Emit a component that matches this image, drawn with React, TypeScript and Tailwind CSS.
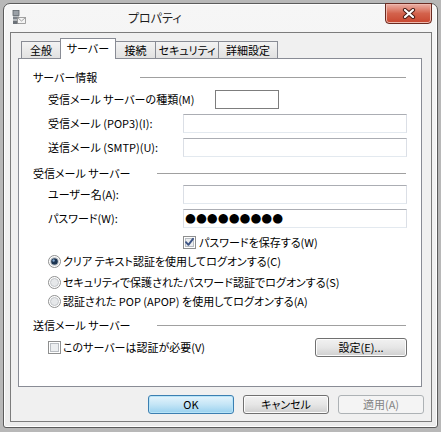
import React from 'react';

const Checkbox: React.FC<{ checked?: boolean }> = ({ checked }) => (
  <svg width="13" height="13" viewBox="0 0 13 13" className="shrink-0">
    <rect x="0.5" y="0.5" width="12" height="12" fill="#ffffff" stroke="#8e8f8f" />
    <rect x="2.5" y="2.5" width="8" height="8" fill="#eceef0" stroke="#b9bdc2" />
    {checked && (
      <path d="M3 6.2 L5.4 8.8 L10 2.8" fill="none" stroke="#3d5485" strokeWidth="1.9" strokeLinecap="round" strokeLinejoin="round" />
    )}
  </svg>
);

const Radio: React.FC<{ checked?: boolean }> = ({ checked }) => (
  <svg width="13" height="13" viewBox="0 0 13 13" className="shrink-0">
    <circle cx="6.5" cy="6.5" r="6" fill="#ffffff" stroke="#8e8f8f" />
    <circle cx="6.5" cy="6.5" r="4" fill="#e6e8ea" stroke="#c2c5c9" />
    {checked && (
      <>
        <circle cx="6.5" cy="6.5" r="3.3" fill="#1d3552" />
        <circle cx="5.6" cy="5.5" r="1.2" fill="#7fa4cc" />
      </>
    )}
  </svg>
);

const Input: React.FC<{ children?: React.ReactNode }> = ({ children }) => (
  <div className="flex-1 h-[19px] bg-white border border-t-[#abadb3] border-x-[#dbdfe6] border-b-[#e3e9ef] flex items-center pl-[1px]">
    {children}
  </div>
);

const GroupHeader: React.FC<{ label: string; w: string; className?: string }> = ({ label, w, className }) => (
  <div className={`flex items-center h-[16px] ${className ?? ''}`}>
    <span className={`${w} shrink-0 whitespace-nowrap`}>{label}</span>
    <div className="flex-1 h-px bg-[#a0a0a0] mr-px" />
  </div>
);

const Tab: React.FC<{ label: string; w: string; selected?: boolean; first?: boolean }> = ({ label, w, selected, first }) => (
  <div
    className={`${w} ${first ? '' : '-ml-px'} flex justify-center border border-[#898c95] ${
      selected
        ? 'relative z-10 h-[21px] bg-white border-b-0 pt-[2px]'
        : 'h-[18px] bg-gradient-to-b from-[#f3f3f3] to-[#e1e1e1] pt-[1px]'
    }`}
  >
    <span className="leading-[15px] whitespace-nowrap">{label}</span>
  </div>
);

const Button: React.FC<{ label: string; kind?: 'default' | 'disabled' | 'normal'; w: string }> = ({ label, kind = 'normal', w }) => {
  const cls =
    kind === 'default'
      ? 'border-[#3c7fb1] bg-gradient-to-b from-[#e5f4fc] via-[#c4e5f6] to-[#98d1ef] text-black shadow-[inset_0_0_0_1px_#b7e4f8]'
      : kind === 'disabled'
      ? 'border-[#adb2b5] bg-[#f4f4f4] text-[#838383]'
      : 'border-[#707070] bg-gradient-to-b from-[#f2f2f2] via-[#e6e6e6] to-[#cfcfcf] text-black shadow-[inset_0_0_0_1px_#fcfcfc]';
  return (
    <div className={`${w} h-[19px] border rounded-[3px] flex items-center justify-center ${cls}`}>
      <span className="leading-none">{label}</span>
    </div>
  );
};

export default function App() {
  return (
    <div className="w-[441px] h-[432px] bg-[#b8b8b8] overflow-hidden font-['Noto_Sans_CJK_JP','Noto_Sans',sans-serif] text-[11px] text-black [font-feature-settings:'palt']">
      {/* window */}
      <div className="mt-[3px] ml-[3px] w-[435px] h-[425px] border border-[#5b5b5b] rounded-t-[7px] rounded-b-[3px] bg-gradient-to-b from-[#f6f6f6] to-[#ececec] shadow-[inset_0_0_0_1px_#ffffff] flex flex-col">
        {/* title bar */}
        <div className="h-[28px] flex items-start shrink-0">
          <svg width="14" height="15" viewBox="0 0 14 15" className="mt-[6px] ml-[8px] shrink-0">
            <rect x="1" y="0.5" width="6" height="5" fill="#9aa0a6" stroke="#5f656b" strokeWidth="0.8" />
            <rect x="1" y="6.5" width="6" height="3" fill="#7d838a" />
            <rect x="1" y="10.5" width="6" height="3.5" fill="#6c7278" />
            <rect x="5.5" y="7.5" width="8" height="6" fill="#f4f4f4" stroke="#8d8d8d" strokeWidth="0.8" />
            <path d="M5.8 7.8 L9.5 11 L13.2 7.8" fill="none" stroke="#8d8d8d" strokeWidth="0.8" />
          </svg>
          <span className="ml-[102px] mt-[6px] text-[12px] leading-[16px] text-[#1e1e1e]">プロパティ</span>
          <div className="flex-1" />
          <div className="-mt-px mr-[5px] w-[47px] h-[21px] rounded-b-[4px] border border-[#6a2b22] bg-gradient-to-b from-[#eab0a6] via-[#d3624c] to-[#c8452e] shadow-[inset_0_0_0_1px_#efb9ae] flex items-center justify-center">
            <svg width="14" height="11" viewBox="0 0 14 11">
              <path d="M3 2 L11 9 M11 2 L3 9" stroke="#4a1d16" strokeWidth="4.2" strokeLinecap="round" />
              <path d="M3 2 L11 9 M11 2 L3 9" stroke="#ffffff" strokeWidth="2.2" strokeLinecap="round" />
            </svg>
          </div>
        </div>

        {/* client area */}
        <div className="ml-[6px] w-[422px] h-[390px] border border-[#7c7c7c] bg-[#f0f0f0] flex flex-col">
          {/* tabs */}
          <div className="mt-[5px] ml-[7px] pl-[3px] flex items-end -mb-px relative z-10">
            <Tab label="全般" w="w-[40px]" first />
            <Tab label="サーバー" w="w-[56px]" selected />
            <Tab label="接続" w="w-[41px]" />
            <Tab label="セキュリティ" w="w-[64px]" />
            <Tab label="詳細設定" w="w-[60px]" />
          </div>

          {/* panel */}
          <div className="ml-[7px] w-[404px] h-[329px] border border-[#898c95] bg-white flex flex-col px-[14px]">
            <GroupHeader label="サーバー情報" w="w-[107px]" className="mt-[10px]" />

            <div className="mt-[5px] h-[19px] flex items-center pl-[15px]">
              <span className="w-[167px] whitespace-nowrap">受信メール サーバーの種類(M)</span>
              <div className="w-[64px] h-[19px] border border-[#7d7d7d] bg-white" />
            </div>

            <div className="mt-[5px] h-[19px] flex items-center pl-[15px]">
              <span className="w-[135px] whitespace-nowrap">受信メール (POP3)(I):</span>
              <Input />
            </div>

            <div className="mt-[5px] h-[19px] flex items-center pl-[15px]">
              <span className="w-[135px] whitespace-nowrap">送信メール (SMTP)(U):</span>
              <Input />
            </div>

            <GroupHeader label="受信メール サーバー" w="w-[124px]" className="mt-[8px]" />

            <div className="mt-[4px] h-[19px] flex items-center pl-[15px]">
              <span className="w-[135px] whitespace-nowrap">ユーザー名(A):</span>
              <Input />
            </div>

            <div className="mt-[5px] h-[19px] flex items-center pl-[15px]">
              <span className="w-[135px] whitespace-nowrap">パスワード(W):</span>
              <Input>
                <span className="font-['DejaVu_Sans',sans-serif] text-[12.5px] leading-none [font-feature-settings:normal]">●●●●●●●●●</span>
              </Input>
            </div>

            <div className="mt-[6px] h-[17px] flex items-center gap-[3px] pl-[150px]">
              <Checkbox checked />
              <span className="whitespace-nowrap">パスワードを保存する(W)</span>
            </div>

            <div className="mt-[2px] h-[17px] flex items-center gap-[2px] pl-[15px]">
              <Radio checked />
              <span className="whitespace-nowrap">クリア テキスト認証を使用してログオンする(C)</span>
            </div>
            <div className="mt-[4px] h-[17px] flex items-center gap-[2px] pl-[15px]">
              <Radio />
              <span className="whitespace-nowrap">セキュリティで保護されたパスワード認証でログオンする(S)</span>
            </div>
            <div className="mt-[2px] h-[17px] flex items-center gap-[2px] pl-[15px]">
              <Radio />
              <span className="whitespace-nowrap">認証された POP (APOP) を使用してログオンする(A)</span>
            </div>

            <GroupHeader label="送信メール サーバー" w="w-[124px]" className="mt-[7px]" />

            <div className="mt-[5px] h-[19px] flex items-center pl-[15px]">
              <Checkbox />
              <span className="ml-[2px] whitespace-nowrap">このサーバーは認証が必要(V)</span>
              <div className="flex-1" />
              <Button label="設定(E)..." w="w-[92px]" />
            </div>
          </div>

          {/* dialog buttons */}
          <div className="mt-[8px] flex justify-end gap-[9px] pr-[7px]">
            <Button label="OK" kind="default" w="w-[86px]" />
            <Button label="キャンセル" w="w-[86px]" />
            <Button label="適用(A)" kind="disabled" w="w-[86px]" />
          </div>
        </div>
      </div>
    </div>
  );
}
